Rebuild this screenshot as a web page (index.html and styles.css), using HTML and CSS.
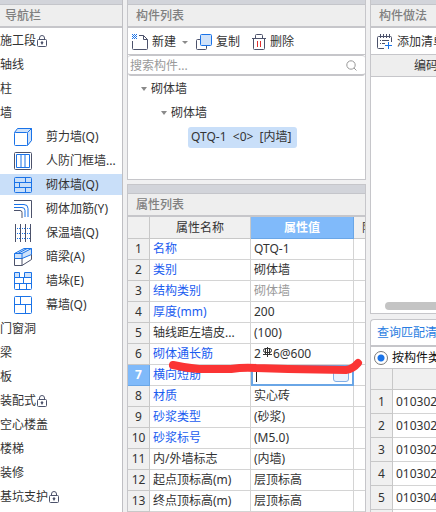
FILE: index.html
```html
<!DOCTYPE html>
<html lang="zh-CN">
<head>
    <meta charset="UTF-8">
    <meta name="viewport" content="width=device-width, initial-scale=1.0">
    <title>构件列表</title>
    <link rel="stylesheet" href="styles.css">
</head>
<body>
    <svg class="defs" width="0" height="0">
        <symbol id="lock" viewBox="0 0 10 12">
            <path d="M2.500 4.500V3a2.500 2.500 0 0 1 5 0v1.500" fill="none" stroke="#4c526b"/>
            <rect x=".5" y="4.500" width="9" height="7" rx="1" fill="#fff" stroke="#4c526b"/>
            <path d="M5 6l1.500 1.500L5 10 3.500 7.500z" fill="#4c526b"/>
        </symbol>
    </svg>

    <!-- 导航栏 -->
    <aside class="nav">
        <div class="strip"></div>
        <h2 class="title">导航栏</h2>
        <ul class="nav-list">
            <li>施工段<svg class="lock"><use href="#lock"/></svg></li>
            <li>轴线</li>
            <li>柱</li>
            <li>墙</li>
            <li class="child">
                <svg class="icon" viewBox="0 0 18 18" fill="none" stroke="#1a73e8"><path d="M.5 4.500L3.500.5h14v12l-4 4z" fill="#cfe2fa"/><path d="M13.500 4.500l4-4v12l-4 5z" fill="#cfe2fa"/><rect x=".5" y="4.500" width="13" height="13" rx="1" fill="#fff"/></svg>
                剪力墙(Q)
            </li>
            <li class="child">
                <svg class="icon" viewBox="0 0 18 18" fill="none" stroke="#1a73e8"><rect x=".5" y=".5" width="17" height="17" rx="1" stroke="#4c526b"/><path d="M2.500 15.500v-13h13v13zM7 2.500v13M11 2.500v13"/></svg>
                人防门框墙...
            </li>
            <li class="child selected">
                <svg class="icon" viewBox="0 0 18 18" fill="none" stroke="#1a73e8"><rect x=".5" y="1.500" width="17" height="15" rx="1"/><path d="M.5 6.500h17M.5 11.500h17M11.500 1.500v5M5.500 6.500v5M11.500 11.500v5"/></svg>
                砌体墙(Q)
            </li>
            <li class="child">
                <svg class="icon" viewBox="0 0 18 18" fill="none" stroke="#1a73e8"><path d="M0 .5h17.500V18" stroke="#4c526b"/><path d="M0 4.500h10q4 0 4 4V17M0 7.500h8q3 0 3 3V17"/><path d="M0 10.500h6q2 0 2 2V18" stroke="#4c526b"/></svg>
                砌体加筋(Y)
            </li>
            <li class="child">
                <svg class="icon" viewBox="0 0 18 18" fill="none" stroke="#4c526b"><path d="M1.500 0v18M6.500 0v18M11.500 0v18M16.500 0v18"/><path d="M3 4.500h3M8 4.500h3M13 4.500h3M3 9.500h3M8 9.500h3M13 9.500h3M3 14.500h3M8 14.500h3M13 14.500h3" stroke="#1a73e8" stroke-dasharray="1 1"/></svg>
                保温墙(Q)
            </li>
            <li class="child">
                <svg class="icon" viewBox="0 0 18 18" fill="none" stroke="#1a73e8"><path d="M.5 5.500L10 .5h7.500v6L8 10.500H.5z" fill="#cfe2fa"/><path d="M.5 5.500H8l9.500-5M8 5.500v5M4 5.500l9-5"/><path d="M.5 10.500v7H8l9.500-6v-5M8 10.500v7" stroke="#4c526b"/></svg>
                暗梁(A)
            </li>
            <li class="child">
                <svg class="icon" viewBox="0 0 18 18" fill="none" stroke="#1a73e8"><path d="M.5.5h5v5h-5zM10.500.5h7v5h-7z" fill="#cfe2fa"/><path d="M.5 5.500v11q0 1 1 1h15q1 0 1-1v-11zM.5 11.500h17M9.500 5.500v6M5.500 11.500v6M12.500 11.500v6"/></svg>
                墙垛(E)
            </li>
            <li class="child">
                <svg class="icon" viewBox="0 0 18 18" fill="none" stroke="#1a73e8"><rect x=".5" y=".5" width="17" height="17" rx="1"/><path d="M.5 8.500h17M6.500.5v8M11.500 8.500v9"/></svg>
                幕墙(Q)
            </li>
            <li>门窗洞</li>
            <li>梁</li>
            <li>板</li>
            <li>装配式<svg class="lock"><use href="#lock"/></svg></li>
            <li>空心楼盖</li>
            <li>楼梯</li>
            <li>装修</li>
            <li>基坑支护<svg class="lock"><use href="#lock"/></svg></li>
        </ul>
    </aside>

    <main class="middle">
        <!-- 构件列表 -->
        <section class="panel components">
            <div class="strip"></div>
            <h2 class="title">构件列表</h2>
            <div class="toolbar">
                <button type="button" class="new">
                    <svg width="16" height="16" viewBox="0 0 16 16" fill="none" stroke="#4c526b"><path d="M7 1.500h4.500l4 4v9q0 1-1 1h-13q-1 0-1-1V7M11.500 1.500v4h4"/><path d="M0 .5h5M0 2.500h5M0 4.500h5" stroke="#1a73e8" stroke-dasharray="1 1"/><path d="M1 1.500h4M1 3.500h4" stroke="#1a73e8" stroke-dasharray="1 1"/></svg>
                    新建
                    <span class="caret"></span>
                </button>
                <button type="button" class="copy">
                    <svg width="16" height="16" viewBox="0 0 16 16" fill="none" stroke="#4c526b"><path d="M4 5.500H1.500q-1 0-1 1v8q0 1 1 1h8q1 0 1-1V12"/><rect x="4.500" y=".5" width="11" height="11" rx="1" fill="#cfe2fa" stroke="#1a73e8"/></svg>
                    复制
                </button>
                <button type="button" class="delete">
                    <svg width="14" height="16" viewBox="0 0 14 16" fill="none" stroke="#4c526b"><path d="M0 4.500h14M3.500 4V1.500q0-1 1-1h5q1 0 1 1V4M1.500 4.500v10q0 1 1 1h9q1 0 1-1v-10"/><path d="M5.500 7v6M8.500 7v6" stroke="#e03030"/></svg>
                    删除
                </button>
            </div>
            <div class="search">
                <input type="text" aria-label="搜索构件" placeholder="搜索构件...">
                <svg width="11" height="11" viewBox="0 0 11 11" fill="none" stroke="#999"><circle cx="5" cy="5" r="4.200"/><path d="M8 8l2.500 2.500"/></svg>
            </div>
            <ul class="tree">
                <li class="level1"><span class="caret"></span>砌体墙</li>
                <li class="level2"><span class="caret"></span>砌体墙</li>
                <li class="level3"><span class="current">QTQ-1  &lt;0&gt;  [内墙]</span></li>
            </ul>
        </section>

        <!-- 属性列表 -->
        <section class="panel properties">
            <div class="strip"></div>
            <h2 class="title">属性列表</h2>
            <table class="grid props">
                <colgroup><col class="c-num"><col class="c-name"><col class="c-value"><col></colgroup>
                <thead>
                    <tr><th></th><th>属性名称</th><th class="active">属性值</th><th class="extra">附加</th></tr>
                </thead>
                <tbody>
                    <tr><th>1</th><td class="key">名称</td><td>QTQ-1</td><td></td></tr>
                    <tr><th>2</th><td class="key">类别</td><td>砌体墙</td><td></td></tr>
                    <tr><th>3</th><td class="key">结构类别</td><td class="muted">砌体墙</td><td></td></tr>
                    <tr><th>4</th><td class="key">厚度(mm)</td><td>200</td><td></td></tr>
                    <tr><th>5</th><td>轴线距左墙皮...</td><td>(100)</td><td></td></tr>
                    <tr><th>6</th><td class="key">砌体通长筋</td><td>2<svg class="rebar" width="12" height="10" viewBox="0 0 12 10" fill="none" stroke="#333"><path d="M6.500 0v10M4.500 1.500h4q2 0 2 2t-2 2h-4q-2 0-2-2t2-2M4.500 1v6M8.500 1v6M2 7.500h9"/></svg>6@600</td><td></td></tr>
                    <tr><th class="active">7</th><td class="key">横向短筋</td><td class="editing"><div class="editor"><span class="cursor"></span><input type="text" aria-label="横向短筋"><button type="button" aria-label="更多"></button></div></td><td></td></tr>
                    <tr><th>8</th><td class="key">材质</td><td>实心砖</td><td></td></tr>
                    <tr><th>9</th><td class="key">砂浆类型</td><td>(砂浆)</td><td></td></tr>
                    <tr><th>10</th><td class="key">砂浆标号</td><td>(M5.0)</td><td></td></tr>
                    <tr><th>11</th><td>内/外墙标志</td><td>(内墙)</td><td></td></tr>
                    <tr><th>12</th><td>起点顶标高(m)</td><td>层顶标高</td><td></td></tr>
                    <tr><th>13</th><td>终点顶标高(m)</td><td>层顶标高</td><td></td></tr>
                </tbody>
            </table>
            <!-- 红色标注线 -->
            <svg class="mark" width="200" height="20" viewBox="0 0 200 20" fill="none" stroke="#fb3434" stroke-width="8" stroke-linecap="round" stroke-linejoin="round"><path d="M7 8Q20 11 33 12L65 12Q78 10 90 11L122 12L180 13Q187 12 192 6"/></svg>
        </section>
    </main>

    <div class="right">
        <!-- 构件做法 -->
        <section class="panel methods">
            <div class="strip"></div>
            <h2 class="title">构件做法</h2>
            <div class="toolbar">
                <button type="button" class="add">
                    <svg width="16" height="16" viewBox="0 0 16 16" fill="none" stroke="#4c526b"><path d="M7 14.500H1.500q-1 0-1-1v-10q0-1 1-1h12q1 0 1 1V8M3.500 0v4M6.500 0v4M9.500 0v4M12.500 0v4"/><path d="M3 6.500h1M5 6.500h7M3 9.500h1M5 9.500h3"/><path d="M11.500 8v7M8 11.500h7" stroke="#1a73e8"/></svg>
                    添加清单
                </button>
            </div>
            <div class="code-head">编码</div>
            <div class="blank"></div>
            <div class="scroll"></div>
        </section>

        <!-- 查询匹配清单 -->
        <section class="panel query">
            <div class="tab"><a href="#query">查询匹配清单</a></div>
            <label class="filter"><input type="radio" name="filter" checked>按构件类型过滤</label>
            <table class="grid codes">
                <colgroup><col class="c-num"><col></colgroup>
                <thead><tr><th></th><th></th></tr></thead>
                <tbody>
                    <tr><th>1</th><td>010302</td></tr>
                    <tr><th>2</th><td>010302</td></tr>
                    <tr><th>3</th><td>010302</td></tr>
                    <tr><th>4</th><td>010302</td></tr>
                    <tr><th>5</th><td>010304</td></tr>
                    <tr><th></th><td></td></tr>
                </tbody>
            </table>
        </section>
    </div>
</body>
</html>
```
FILE: styles.css
```css
* {
    box-sizing: border-box;
}

body {
    margin: 0;
    height: 100vh;
    overflow: hidden;
    display: grid;
    grid-template-columns: 123px 239px minmax(0, 1fr);
    column-gap: 4px;
    background-color: #f0f0f1;
    color: #333;
    font-family: "Noto Sans", "Noto Sans CJK SC", sans-serif;
    font-size: 12px;
    line-height: 20px;
    white-space: nowrap;
}

button,
input {
    font: inherit;
    color: inherit;
    margin: 0;
    padding: 0;
    border: none;
    background: none;
}

ul {
    list-style: none;
    margin: 0;
    padding: 0;
}

svg {
    flex: none;
}

.defs {
    position: absolute;
}

.strip {
    height: 5px;
    background-color: #d2d4da;
    border-bottom: 1px solid #c4c5ca;
}

.title {
    margin: 0;
    height: 23px;
    padding-left: 8px;
    line-height: 22px;
    font-size: 12px;
    font-weight: 500;
    color: #808080;
    background-color: #eee;
    border-bottom: 2px solid #c6c6ca;
}

/* navigation */
.nav {
    background-color: #fff;
    border-right: 1px solid #bfbfc3;
    overflow: hidden;
}

.nav .title {
    padding-left: 5px;
}

.nav-list {
    display: flex;
    flex-direction: column;
    gap: 3px;
    padding-top: 2px;
}

.nav-list li {
    height: 21px;
    display: flex;
    align-items: center;
}

.nav-list .child {
    padding-left: 14px;
    gap: 14px;
}

.nav-list .selected {
    background-color: #c9dff9;
}

.icon {
    width: 18px;
    height: 18px;
}

.lock {
    width: 10px;
    height: 12px;
    margin-left: 1px;
}

/* panels */
.middle,
.right {
    min-width: 0;
    min-height: 0;
    display: flex;
    flex-direction: column;
    overflow: hidden;
}

.panel {
    background-color: #fff;
    border-left: 1px solid #c6c6ca;
    overflow: hidden;
}

.middle .panel {
    border-right: 1px solid #c6c6ca;
}

.toolbar {
    height: 27px;
    display: flex;
    align-items: center;
    padding-top: 2px;
    border-bottom: 1px solid #c6c6ca;
}

.toolbar button {
    display: flex;
    align-items: center;
    gap: 4px;
}

.caret {
    border: 3px solid transparent;
    border-top: 4px solid #8a8a8a;
    border-bottom: none;
}

.toolbar .new {
    padding-left: 4px;
}

.toolbar .caret {
    border-width: 3px 3px 0;
    margin-left: 2px;
}

.toolbar .copy {
    margin-left: 8px;
}

.toolbar .delete {
    margin-left: 12px;
}

.toolbar .add {
    padding-left: 6px;
}

.components {
    flex: none;
    border-bottom: 1px solid #c6c6ca;
}

.search {
    height: 21px;
    display: flex;
    align-items: center;
    padding: 1px 8px 0 2px;
    border: 1px solid #c6c6ca;
    border-width: 1px 0 2px;
    border-radius: 3px;
}

.search input {
    flex: 1;
    min-width: 0;
    height: 17px;
    outline: none;
}

.search input::placeholder {
    color: #999;
    opacity: 1;
}

.tree {
    padding: 1px 0 30px;
}

.tree li {
    height: 24px;
    display: flex;
    align-items: center;
    gap: 4px;
}

.tree .level1 {
    padding-left: 13px;
}

.tree .level2 {
    padding-left: 33px;
}

.tree .level3 {
    padding-left: 60px;
}

.current {
    padding: 0 5px 1px 3px;
    border-radius: 3px;
    background-color: #c9dff9;
    white-space: pre;
}

.properties {
    position: relative;
    flex: 1;
    margin-top: 4px;
    border-top: 1px solid #c6c6ca;
}

.properties .strip {
    height: 9px;
}

/* grids */
.grid {
    width: 100%;
    table-layout: fixed;
    border-collapse: separate;
    border-spacing: 0;
}

.grid th,
.grid td {
    height: 21px;
    padding: 0;
    line-height: 20px;
    font-weight: normal;
    border-right: 1px solid #d4d4d4;
    border-bottom: 1px solid #d4d4d4;
    overflow: hidden;
}

.grid th {
    background-color: #f0f0f0;
    border-color: #c8c8c8;
}

.grid td {
    padding-left: 3px;
}

.grid td:last-child,
.grid thead th:last-child {
    border-right: none;
}

.props thead th {
    height: 22px;
}

.c-num {
    width: 22px;
}

.c-name {
    width: 101px;
}

.c-value {
    width: 103px;
}

.grid .key {
    color: #1a5cf0;
}

.grid .muted {
    color: #999;
}

.grid .active {
    color: #fff;
    font-weight: bold;
    background-color: #80bafa;
    border-color: #6aa6e6;
}

.grid .extra {
    text-align: left;
    padding-left: 8px;
}

.rebar {
    vertical-align: 1px;
}

.grid .editing {
    padding: 0;
    border: none;
}

.editor {
    height: 21px;
    display: flex;
    align-items: center;
    padding-left: 3px;
    border: 2px solid #6aa6e6;
}

.cursor {
    width: 1px;
    height: 13px;
    background-color: #222;
}

.editor input {
    flex: 1;
    min-width: 0;
    height: 17px;
    outline: none;
}

.editor button {
    width: 16px;
    height: 13px;
    margin-right: 3px;
    background-color: #eaf2fc;
    border: 1px solid #80aee6;
    border-radius: 3px;
}

.mark {
    position: absolute;
    left: 38px;
    top: 172px;
}

/* right column */
.methods {
    height: 314px;
    flex: none;
    display: flex;
    flex-direction: column;
    border-bottom: 1px solid #c6c6ca;
}

.code-head {
    height: 22px;
    padding: 1px 0 0 43px;
    background-color: #eee;
    border-bottom: 1px solid #c6c6ca;
}

.blank {
    flex: 1;
}

.scroll {
    height: 8px;
    margin: 0 0 3px 14px;
    border-radius: 4px 0 0 4px;
    background-color: #c4c4c4;
}

.query {
    flex: 1;
    margin-top: 5px;
    border-top: 1px solid #c6c6ca;
    border-top-left-radius: 4px;
}

.tab {
    height: 27px;
    padding: 3px 0 0 6px;
    border-bottom: 2px solid #c6c6ca;
}

.tab a {
    color: #2a7de1;
    text-decoration: none;
}

.filter {
    height: 21px;
    display: flex;
    align-items: center;
    gap: 4px;
    padding-left: 3px;
    color: #111;
}

.filter input {
    appearance: none;
    flex: none;
    width: 14px;
    height: 14px;
    border: 1px solid #777;
    border-radius: 50%;
    background: radial-gradient(circle, #1a73e8 3px, #fff 4px);
}

.codes {
    border-top: 1px solid #c6c6ca;
}

.codes tbody th,
.codes tbody td {
    height: 24px;
}
```
